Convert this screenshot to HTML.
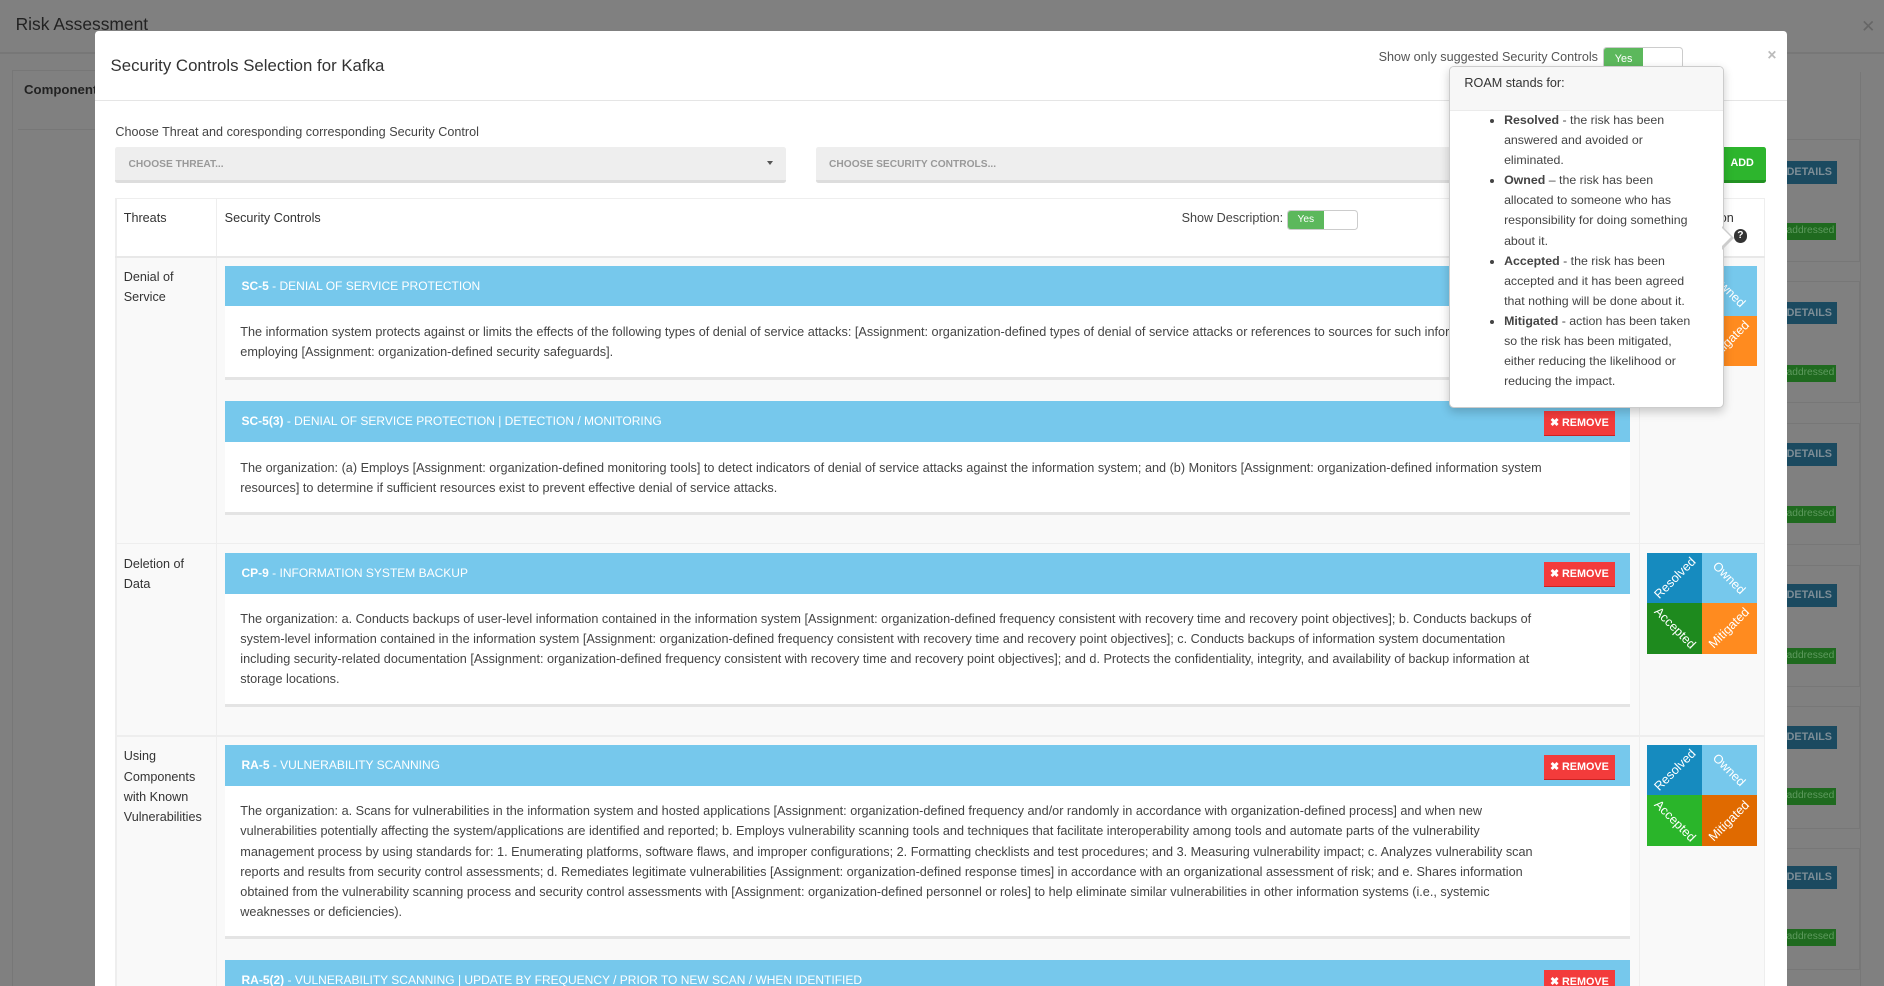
<!DOCTYPE html>
<html><head><meta charset="utf-8">
<style>
html,body{margin:0;padding:0;width:1884px;height:986px;overflow:hidden;background:#808080;}
#w{zoom:1.2015;width:1568px;height:821px;position:relative;overflow:hidden;font-family:"Liberation Sans",sans-serif;color:#333;}
.a{position:absolute;}
.nw{white-space:nowrap;}
.card{position:absolute;left:187px;width:1170px;}
.ch{height:34px;background:#76c8ec;color:#fff;font-size:10px;line-height:34px;padding-left:14px;box-sizing:border-box;white-space:nowrap;position:relative;}
.ch b{font-weight:bold;}
.cb{background:#fff;font-size:10.55px;line-height:16.7px;padding:13px 13px 12px 13px;white-space:nowrap;overflow:hidden;border-bottom:3px solid #e4e4e4;color:#444;}
.rm{position:absolute;right:13px;top:8px;width:59px;height:20px;background:#f33b3b;color:#fff;font-size:9px;font-weight:bold;line-height:20px;text-align:center;border-bottom:1px solid #c22;}
.roam{position:absolute;left:1371px;width:91px;height:84px;}
.t{position:absolute;width:45.5px;height:42px;overflow:hidden;color:#fff;font-size:10.5px;}
.t span{position:absolute;left:50%;top:50%;white-space:nowrap;}
.det{position:absolute;left:1487px;width:42px;height:19px;background:#1b4a60;color:#7d8d96;font-size:9px;font-weight:bold;line-height:19px;}
.adr{position:absolute;left:1487px;width:41px;height:14px;background:#1f6a1f;color:#5e9a5e;font-size:8.5px;line-height:14px;}
</style></head><body><div id="w">
<div class="a" style="left:0;top:0;width:1568px;height:43px;border-bottom:2px solid #777;"></div>
<div class="a nw" style="left:13px;top:12px;font-size:14.5px;color:#222;">Risk Assessment</div>
<div class="a" style="left:1549px;top:13px;font-size:14px;color:#666;">✕</div>
<div class="a" style="left:10px;top:58px;width:80px;height:780px;border:1px solid #777;"></div>
<div class="a nw" style="left:20px;top:68px;font-size:11px;font-weight:bold;color:#222;">Component</div>
<div class="a" style="left:15px;top:107px;width:70px;height:1px;background:#777;"></div>
<div class="a" style="left:1548px;top:60px;width:1px;height:761px;background:#777;"></div>
<div class="det" style="top:134px;">DETAILS</div><div class="adr" style="top:186px;">addressed</div>
<div class="det" style="top:251px;">DETAILS</div><div class="adr" style="top:304px;">addressed</div>
<div class="det" style="top:369px;">DETAILS</div><div class="adr" style="top:421px;">addressed</div>
<div class="det" style="top:486px;">DETAILS</div><div class="adr" style="top:539px;">addressed</div>
<div class="det" style="top:604px;">DETAILS</div><div class="adr" style="top:656px;">addressed</div>
<div class="det" style="top:721px;">DETAILS</div><div class="adr" style="top:773px;">addressed</div>
<div class="a" style="left:1487px;top:116px;width:60px;height:100px;border:1px solid #777;border-left:none;"></div>
<div class="a" style="left:1487px;top:234px;width:60px;height:100px;border:1px solid #777;border-left:none;"></div>
<div class="a" style="left:1487px;top:352px;width:60px;height:100px;border:1px solid #777;border-left:none;"></div>
<div class="a" style="left:1487px;top:470px;width:60px;height:100px;border:1px solid #777;border-left:none;"></div>
<div class="a" style="left:1487px;top:588px;width:60px;height:100px;border:1px solid #777;border-left:none;"></div>
<div class="a" style="left:1487px;top:706px;width:60px;height:100px;border:1px solid #777;border-left:none;"></div>

<div class="a" style="left:79px;top:26px;width:1408px;height:800px;background:#fff;border-radius:3px 3px 0 0;"></div>
<div class="a nw" style="left:92px;top:47px;font-size:14px;color:#333;">Security Controls Selection for Kafka</div>
<div class="a" style="left:79px;top:83px;width:1408px;height:1px;background:#e5e5e5;"></div>
<div class="a nw" style="right:238px;top:42px;font-size:10.5px;color:#555;">Show only suggested Security Controls</div>
<div class="a" style="left:1334px;top:39px;width:65px;height:17px;border:1px solid #ccc;border-radius:3px;background:#fff;overflow:hidden;"><div style="width:33px;height:17px;background:#5cb85c;color:#fff;font-size:9px;line-height:19px;text-align:center;">Yes</div></div>
<div class="a" style="left:1471px;top:39px;font-size:13px;color:#bbb;font-weight:bold;">×</div>

<div class="a nw" style="left:96px;top:104px;font-size:10.5px;color:#444;">Choose Threat and coresponding corresponding Security Control</div>
<div class="a" style="left:96px;top:122px;width:558px;height:28px;background:#eee;border-bottom:3px solid #ddd;border-radius:2px;"></div>
<div class="a nw" style="left:107px;top:132px;font-size:8.5px;font-weight:bold;color:#999;">CHOOSE THREAT...</div>
<div class="a" style="left:638px;top:134px;width:0;height:0;border-left:3px solid transparent;border-right:3px solid transparent;border-top:4px solid #555;"></div>
<div class="a" style="left:679px;top:122px;width:760px;height:28px;background:#eee;border-bottom:3px solid #ddd;border-radius:2px;"></div>
<div class="a nw" style="left:690px;top:132px;font-size:8.5px;font-weight:bold;color:#999;">CHOOSE SECURITY CONTROLS...</div>
<div class="a" style="left:1430px;top:122px;width:40px;height:28px;background:#2db52d;border-bottom:3px solid #229222;border-radius:2px;color:#fff;font-size:9px;font-weight:bold;line-height:28px;text-align:center;">ADD</div>

<div class="a" style="left:96px;top:165px;width:1373px;height:660px;border-top:1px solid #eee;"></div>
<div class="a" style="left:96px;top:214px;width:1373px;height:620px;background:#f9f9f9;"></div>
<div class="a" style="left:96px;top:165px;width:1px;height:660px;background:#eee;"></div>
<div class="a" style="left:180px;top:165px;width:1px;height:660px;background:#eee;"></div>
<div class="a" style="left:1364px;top:165px;width:1px;height:660px;background:#eee;"></div>
<div class="a" style="left:1468px;top:165px;width:1px;height:660px;background:#eee;"></div>
<div class="a" style="left:96px;top:213px;width:1373px;height:2px;background:#e8e8e8;"></div>
<div class="a" style="left:96px;top:452px;width:1373px;height:1px;background:#eee;"></div>
<div class="a" style="left:96px;top:612px;width:1373px;height:1px;background:#eee;"></div>
<div class="a nw" style="left:103px;top:176px;font-size:10.5px;">Threats</div>
<div class="a nw" style="left:187px;top:176px;font-size:10.5px;">Security Controls</div>
<div class="a nw" style="right:500px;top:176px;font-size:10.5px;color:#444;">Show Description:</div>
<div class="a" style="left:1071px;top:175px;width:58px;height:15px;border:1px solid #ccc;border-radius:3px;background:#fff;overflow:hidden;"><div style="width:30px;height:15px;background:#5cb85c;color:#fff;font-size:8.5px;line-height:15px;text-align:center;">Yes</div></div>
<div class="a nw" style="right:125px;top:176px;font-size:10.5px;">ROAM Classification</div>
<div class="a" style="left:1443px;top:191px;width:11px;height:11px;border-radius:50%;background:#333;color:#fff;font-size:8.5px;font-weight:bold;line-height:11px;text-align:center;">?</div>

<div class="a" style="left:103px;top:222px;font-size:10.5px;line-height:17px;">Denial of<br>Service</div>
<div class="a" style="left:103px;top:461px;font-size:10.5px;line-height:17px;">Deletion of<br>Data</div>
<div class="a" style="left:103px;top:621px;font-size:10.5px;line-height:17px;">Using<br>Components<br>with Known<br>Vulnerabilities</div>

<div class="card" style="top:221px;"><div class="ch"><b>SC-5</b> - DENIAL OF SERVICE PROTECTION</div>
<div class="cb">The information system protects against or limits the effects of the following types of denial of service attacks: [Assignment: organization-defined types of denial of service attacks or references to sources for such information] by<br>employing [Assignment: organization-defined security safeguards].</div></div>

<div class="card" style="top:334px;"><div class="ch"><b>SC-5(3)</b> - DENIAL OF SERVICE PROTECTION | DETECTION / MONITORING<div class="rm">✖ REMOVE</div></div>
<div class="cb">The organization: (a) Employs [Assignment: organization-defined monitoring tools] to detect indicators of denial of service attacks against the information system; and (b) Monitors [Assignment: organization-defined information system<br>resources] to determine if sufficient resources exist to prevent effective denial of service attacks.</div></div>

<div class="card" style="top:460px;"><div class="ch"><b>CP-9</b> - INFORMATION SYSTEM BACKUP<div class="rm">✖ REMOVE</div></div>
<div class="cb">The organization: a. Conducts backups of user-level information contained in the information system [Assignment: organization-defined frequency consistent with recovery time and recovery point objectives]; b. Conducts backups of<br>system-level information contained in the information system [Assignment: organization-defined frequency consistent with recovery time and recovery point objectives]; c. Conducts backups of information system documentation<br>including security-related documentation [Assignment: organization-defined frequency consistent with recovery time and recovery point objectives]; and d. Protects the confidentiality, integrity, and availability of backup information at<br>storage locations.</div></div>

<div class="card" style="top:620px;"><div class="ch"><b>RA-5</b> - VULNERABILITY SCANNING<div class="rm">✖ REMOVE</div></div>
<div class="cb">The organization: a. Scans for vulnerabilities in the information system and hosted applications [Assignment: organization-defined frequency and/or randomly in accordance with organization-defined process] and when new<br>vulnerabilities potentially affecting the system/applications are identified and reported; b. Employs vulnerability scanning tools and techniques that facilitate interoperability among tools and automate parts of the vulnerability<br>management process by using standards for: 1. Enumerating platforms, software flaws, and improper configurations; 2. Formatting checklists and test procedures; and 3. Measuring vulnerability impact; c. Analyzes vulnerability scan<br>reports and results from security control assessments; d. Remediates legitimate vulnerabilities [Assignment: organization-defined response times] in accordance with an organizational assessment of risk; and e. Shares information<br>obtained from the vulnerability scanning process and security control assessments with [Assignment: organization-defined personnel or roles] to help eliminate similar vulnerabilities in other information systems (i.e., systemic<br>weaknesses or deficiencies).</div></div>

<div class="card" style="top:799px;"><div class="ch"><b>RA-5(2)</b> - VULNERABILITY SCANNING | UPDATE BY FREQUENCY / PRIOR TO NEW SCAN / WHEN IDENTIFIED<div class="rm">✖ REMOVE</div></div></div>

<div class="roam" style="top:221px;">
<div class="t" style="left:0;top:0;background:#168bbf;"><span style="transform:translate(-50%,-50%) rotate(-45deg)">Resolved</span></div>
<div class="t" style="left:45.5px;top:0;background:#76c8ec;"><span style="transform:translate(-50%,-50%) rotate(45deg)">Owned</span></div>
<div class="t" style="left:0;top:42px;background:#1e8a1e;"><span style="transform:translate(-50%,-50%) rotate(45deg)">Accepted</span></div>
<div class="t" style="left:45.5px;top:42px;background:#ff8b1f;"><span style="transform:translate(-50%,-50%) rotate(-45deg)">Mitigated</span></div>
</div>
<div class="roam" style="top:460px;">
<div class="t" style="left:0;top:0;background:#168bbf;"><span style="transform:translate(-50%,-50%) rotate(-45deg)">Resolved</span></div>
<div class="t" style="left:45.5px;top:0;background:#76c8ec;"><span style="transform:translate(-50%,-50%) rotate(45deg)">Owned</span></div>
<div class="t" style="left:0;top:42px;background:#1e8a1e;"><span style="transform:translate(-50%,-50%) rotate(45deg)">Accepted</span></div>
<div class="t" style="left:45.5px;top:42px;background:#ff8b1f;"><span style="transform:translate(-50%,-50%) rotate(-45deg)">Mitigated</span></div>
</div>
<div class="roam" style="top:620px;">
<div class="t" style="left:0;top:0;background:#168bbf;"><span style="transform:translate(-50%,-50%) rotate(-45deg)">Resolved</span></div>
<div class="t" style="left:45.5px;top:0;background:#76c8ec;"><span style="transform:translate(-50%,-50%) rotate(45deg)">Owned</span></div>
<div class="t" style="left:0;top:42px;background:#2ab52a;"><span style="transform:translate(-50%,-50%) rotate(45deg)">Accepted</span></div>
<div class="t" style="left:45.5px;top:42px;background:#e06a00;"><span style="transform:translate(-50%,-50%) rotate(-45deg)">Mitigated</span></div>
</div>

<div class="a" style="left:1206px;top:55px;width:227px;height:283px;background:#fff;border:1px solid #ccc;border-radius:4px;box-shadow:0 3px 8px rgba(0,0,0,.2);overflow:hidden;">
<div style="height:36px;background:#f7f7f7;border-bottom:1px solid #ebebeb;font-size:10.5px;line-height:28px;padding-left:12px;color:#333;">ROAM stands for:</div>
<ul style="margin:0;padding:0 0 0 45px;font-size:10.3px;line-height:16.7px;color:#444;position:relative;top:-1px;">
<li><b>Resolved</b> - the risk has been<br>answered and avoided or<br>eliminated.</li>
<li><b>Owned</b> – the risk has been<br>allocated to someone who has<br>responsibility for doing something<br>about it.</li>
<li><b>Accepted</b> - the risk has been<br>accepted and it has been agreed<br>that nothing will be done about it.</li>
<li><b>Mitigated</b> - action has been taken<br>so the risk has been mitigated,<br>either reducing the likelihood or<br>reducing the impact.</li>
</ul></div>
<div class="a" style="left:1433px;top:188px;width:0;height:0;border-top:10px solid transparent;border-bottom:10px solid transparent;border-left:10px solid #ccc;"></div>
<div class="a" style="left:1432px;top:189px;width:0;height:0;border-top:9px solid transparent;border-bottom:9px solid transparent;border-left:9px solid #fff;"></div>
</div></body></html>
